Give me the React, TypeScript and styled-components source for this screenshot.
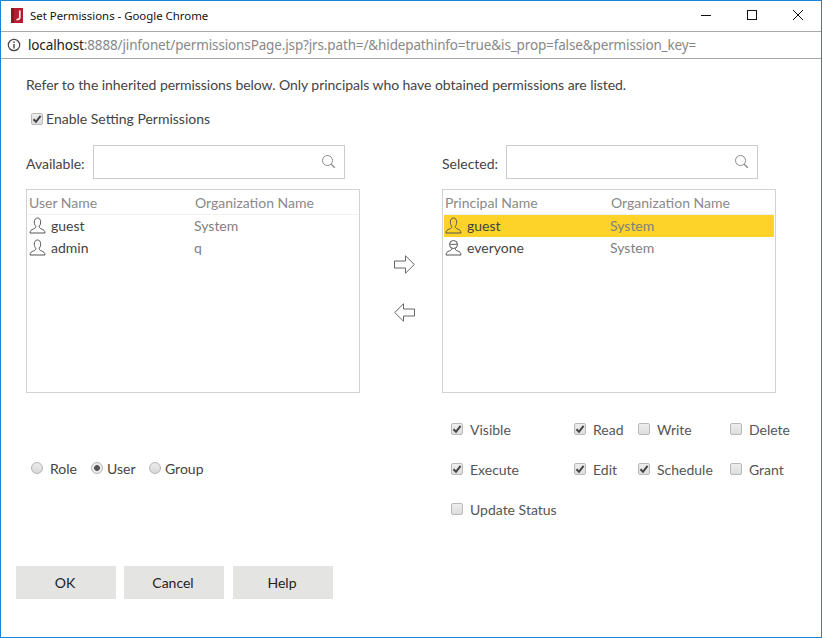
import React, { FC } from 'react';
import styled, { createGlobalStyle } from 'styled-components';

const GlobalStyle = createGlobalStyle`
  html, body {
    margin: 0;
    padding: 0;
    background: #fff;
  }
  body {
    font-family: Lato, 'Open Sans', sans-serif;
    color: #444;
  }
`;

const Window = styled.div`
  box-sizing: border-box;
  width: 822px;
  height: 638px;
  display: flex;
  flex-direction: column;
  background: #fff;
  border: 1px solid #1883d7;
`;

const TitleBar = styled.div`
  height: 30px;
  flex-shrink: 0;
  display: flex;
  align-items: center;
  padding-left: 10px;
  border-bottom: 1px solid #a9a9a9;
  font: 11.4px 'Noto Sans', sans-serif;
  color: #111;
`;

const Title = styled.span`
  margin-left: 6px;
  padding-bottom: 2px;
  flex: 1;
`;

const WinButton = styled.div`
  box-sizing: border-box;
  width: 46px;
  height: 30px;
  padding-bottom: 2px;
  display: flex;
  align-items: center;
  justify-content: center;
`;

const AddressBar = styled.div`
  height: 26px;
  flex-shrink: 0;
  display: flex;
  align-items: center;
  padding-left: 6px;
  gap: 7px;
  border-bottom: 1px solid #a9a9a9;
  font: 13.5px 'Noto Sans', sans-serif;
  letter-spacing: -0.14px;
  color: #888;
`;

const Host = styled.span`
  color: #222;
`;

const Content = styled.div`
  flex: 1;
  display: flex;
  flex-direction: column;
  padding: 0 0 0 25px;
  font-size: 14px;
`;

const Notice = styled.div`
  margin-top: 17px;
  line-height: 17px;
  letter-spacing: -0.05px;
  color: #444;
`;

const EnableRow = styled.label`
  display: flex;
  align-items: center;
  gap: 3px;
  margin: 17px 0 0 5px;
  height: 17px;
`;

const Columns = styled.div`
  display: grid;
  grid-template-columns: 334px 82px 334px;
  margin-top: 18px;
`;

const SearchRow = styled.div`
  display: flex;
  align-items: center;
  gap: 8px;
  height: 33px;
  margin-bottom: 11px;
`;

const SearchLabel = styled.span`
  padding-top: 4px;
`;

const SearchBox = styled.div`
  box-sizing: border-box;
  width: 252px;
  height: 34px;
  display: flex;
  align-items: center;
  justify-content: flex-end;
  padding-right: 8px;
  border: 1px solid #ccc;
`;

const ListBox = styled.div`
  box-sizing: border-box;
  height: 204px;
  border: 1px solid #d2d2d2;
  padding: 0 1px;
`;

const ListHead = styled.div`
  display: grid;
  grid-template-columns: 166px 1fr;
  height: 24px;
  align-items: center;
  padding-left: 1px;
  border-bottom: 1px solid #f0f0f0;
  color: #8a8a8a;
`;

const ListRow = styled.div<{ $selected?: boolean }>`
  display: grid;
  grid-template-columns: 166px 1fr;
  height: 22px;
  align-items: center;
  background: ${(p) => (p.$selected ? '#fdd329' : 'transparent')};
  & > * {
    margin-top: -2px;
  }
`;

const NameCell = styled.span`
  display: flex;
  align-items: center;
  gap: 5px;
  padding-left: 1px;
  color: #444;
`;

const OrgCell = styled.span`
  color: #808080;
`;

const Arrows = styled.div`
  display: flex;
  flex-direction: column;
  align-items: center;
  gap: 29px;
  padding: 110px 0 0 7px;
`;

const Lower = styled.div`
  display: grid;
  grid-template-columns: 425px 1fr;
  margin-top: 26px;
`;

const Radios = styled.div`
  display: flex;
  align-items: center;
  height: 20px;
  margin: 39px 0 0 5px;
`;

const RadioLabel = styled.span<{ $gap: number; $width: number }>`
  display: flex;
  align-items: center;
  gap: ${(p) => p.$gap}px;
  width: ${(p) => p.$width}px;
`;

const RadioDot = styled.span<{ $on?: boolean }>`
  box-sizing: border-box;
  width: 12px;
  height: 12px;
  border-radius: 50%;
  border: 1px solid #b4b4b4;
  background: ${(p) =>
    p.$on
      ? 'radial-gradient(circle, #555 0 2.6px, #ececec 3.2px)'
      : 'linear-gradient(#ececec, #d8d8d8)'};
`;

const PermGrid = styled.div`
  display: grid;
  grid-template-columns: 123px 64px 92px 1fr;
  grid-auto-rows: 40px;
`;

const Perm = styled.label`
  display: flex;
  align-items: center;
  gap: 7px;
  height: 20px;
  white-space: nowrap;
  color: #555;
`;

const Box = styled.span`
  box-sizing: border-box;
  width: 12px;
  height: 12px;
  flex-shrink: 0;
  display: flex;
  align-items: center;
  justify-content: center;
  border: 1px solid #b9b9b9;
  border-radius: 2px;
  background: linear-gradient(#eeeeee, #dddddd);
`;

const Footer = styled.div`
  display: flex;
  gap: 8px;
  margin: 27px 0 0 -10px;
`;

const Button = styled.div`
  box-sizing: border-box;
  width: 100px;
  height: 33px;
  display: flex;
  align-items: center;
  justify-content: center;
  padding-right: 2px;
  background: #e4e4e3;
  color: #222;
  &:last-child {
    margin-left: 1px;
  }
`;

const Check: FC<{ on?: boolean }> = ({ on }) => (
  <Box>
    {on && (
      <svg width="10" height="10" viewBox="0 0 10 10">
        <path d="M1.5 5.2 L4 7.8 L8.6 1.8" fill="none" stroke="#444" strokeWidth="2" />
      </svg>
    )}
  </Box>
);

const Magnifier = () => (
  <svg width="15" height="15" viewBox="0 0 15 15" fill="none" stroke="#8c8c8c" strokeWidth="1">
    <circle cx="6.5" cy="6.5" r="5" />
    <path d="M10.2 10.2 L13.8 13.8" strokeWidth="1.4" />
  </svg>
);

const UserIcon = () => (
  <svg width="17" height="17" viewBox="0 0 17 17" fill="none" stroke="#555" strokeWidth="1">
    <path d="M5.3 5.2 C5.3 2.6 6.6 1 8.5 1 C10.4 1 11.7 2.6 11.7 5.2 C11.7 7 11 8.4 10.2 9.3 C10.1 10.6 10.8 11.2 12.4 11.9 C14.6 12.8 15.8 13.5 16 16 L1 16 C1.2 13.5 2.4 12.8 4.6 11.9 C6.2 11.2 6.9 10.6 6.8 9.3 C6 8.4 5.3 7 5.3 5.2 Z" />
  </svg>
);

const EveryoneIcon = () => (
  <svg width="17" height="17" viewBox="0 0 17 17" fill="none" stroke="#555" strokeWidth="1">
    <circle cx="8.5" cy="5.5" r="4" />
    <path d="M4.6 5 C6.5 5.6 10.5 5.6 12.4 5" />
    <path d="M6.8 9.2 C6.9 10.8 6 11.4 4.4 11.9 C2.4 12.5 1.3 13.5 1 16 L16 16 C15.7 13.5 14.6 12.5 12.6 11.9 C11 11.4 10.1 10.8 10.2 9.2" />
  </svg>
);

const ArrowRight = () => (
  <svg width="21" height="19" viewBox="0 0 21 19" fill="#fff" stroke="#666" strokeWidth="1">
    <path d="M0.5 6 H11.5 V0.8 L20.3 9.5 L11.5 18.2 V13 H0.5 Z" />
  </svg>
);

const ArrowLeft = () => (
  <svg width="21" height="19" viewBox="0 0 21 19" fill="#fff" stroke="#666" strokeWidth="1">
    <path d="M20.5 6 H9.5 V0.8 L0.7 9.5 L9.5 18.2 V13 H20.5 Z" />
  </svg>
);

const leftRows = [
  { name: 'guest', org: 'System' },
  { name: 'admin', org: 'q' },
];

const perms: [string, boolean][] = [
  ['Visible', true],
  ['Read', true],
  ['Write', false],
  ['Delete', false],
  ['Execute', true],
  ['Edit', true],
  ['Schedule', true],
  ['Grant', false],
  ['Update Status', false],
];

export default function App() {
  return (
    <>
      <GlobalStyle />
      <Window>
        <TitleBar>
          <svg width="13" height="16" viewBox="0 0 13 16">
            <rect x="0" y="0" width="12" height="15" fill="#b01f2e" />
            <rect x="0" y="0" width="3" height="15" fill="#8a1722" />
            <path d="M8.8 2.5 V9.5 C8.8 11 7.8 11.7 5.5 11.7" fill="none" stroke="#f5e6e6" strokeWidth="1.7" />
          </svg>
          <Title>Set Permissions - Google Chrome</Title>
          <WinButton>
            <svg width="12" height="12" viewBox="0 0 12 12"><path d="M1 6.5 H11" stroke="#111" strokeWidth="1" /></svg>
          </WinButton>
          <WinButton>
            <svg width="12" height="12" viewBox="0 0 12 12"><rect x="1.5" y="1.5" width="9" height="9" fill="none" stroke="#111" /></svg>
          </WinButton>
          <WinButton>
            <svg width="12" height="12" viewBox="0 0 12 12"><path d="M1 1 L11 11 M11 1 L1 11" stroke="#111" strokeWidth="1" /></svg>
          </WinButton>
        </TitleBar>
        <AddressBar>
          <svg width="14" height="14" viewBox="0 0 14 14" fill="none" stroke="#444">
            <circle cx="7" cy="7" r="5.7" strokeWidth="1.2" />
            <path d="M7 6 V10.4" strokeWidth="1.4" />
            <path d="M7 3.4 V5" strokeWidth="1.4" />
          </svg>
          <span>
            <Host>localhost</Host>:8888/jinfonet/permissionsPage.jsp?jrs.path=/&amp;hidepathinfo=true&amp;is_prop=false&amp;permission_key=
          </span>
        </AddressBar>
        <Content>
          <Notice>Refer to the inherited permissions below. Only principals who have obtained permissions are listed.</Notice>
          <EnableRow>
            <Check on />
            Enable Setting Permissions
          </EnableRow>
          <Columns>
            <div>
              <SearchRow>
                <SearchLabel>Available:</SearchLabel>
                <SearchBox>
                  <Magnifier />
                </SearchBox>
              </SearchRow>
              <ListBox>
                <ListHead>
                  <span>User Name</span>
                  <span>Organization Name</span>
                </ListHead>
                {leftRows.map((row) => (
                  <ListRow key={row.name}>
                    <NameCell>
                      <UserIcon />
                      {row.name}
                    </NameCell>
                    <OrgCell>{row.org}</OrgCell>
                  </ListRow>
                ))}
              </ListBox>
            </div>
            <Arrows>
              <ArrowRight />
              <ArrowLeft />
            </Arrows>
            <div>
              <SearchRow>
                <SearchLabel>Selected:</SearchLabel>
                <SearchBox>
                  <Magnifier />
                </SearchBox>
              </SearchRow>
              <ListBox>
                <ListHead>
                  <span>Principal Name</span>
                  <span>Organization Name</span>
                </ListHead>
                <ListRow $selected>
                  <NameCell>
                    <UserIcon />
                    guest
                  </NameCell>
                  <OrgCell>System</OrgCell>
                </ListRow>
                <ListRow>
                  <NameCell>
                    <EveryoneIcon />
                    everyone
                  </NameCell>
                  <OrgCell>System</OrgCell>
                </ListRow>
              </ListBox>
            </div>
          </Columns>
          <Lower>
            <Radios>
              <RadioLabel $gap={7} $width={60}>
                <RadioDot />
                Role
              </RadioLabel>
              <RadioLabel $gap={4} $width={58}>
                <RadioDot $on />
                User
              </RadioLabel>
              <RadioLabel $gap={4} $width={70}>
                <RadioDot />
                Group
              </RadioLabel>
            </Radios>
            <PermGrid>
              {perms.map(([label, on]) => (
                <Perm key={label}>
                  <Check on={on} />
                  {label}
                </Perm>
              ))}
            </PermGrid>
          </Lower>
          <Footer>
            <Button>OK</Button>
            <Button>Cancel</Button>
            <Button>Help</Button>
          </Footer>
        </Content>
      </Window>
    </>
  );
}
